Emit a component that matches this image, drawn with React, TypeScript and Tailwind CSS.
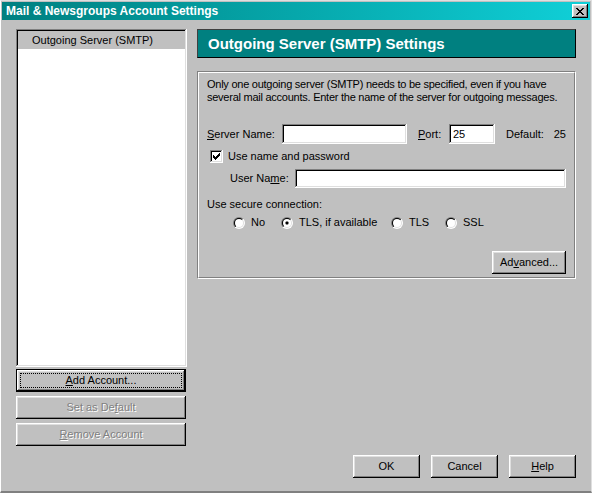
import type { ReactNode } from "react";

const raised =
  "shadow-[inset_-1px_-1px_#000,inset_1px_1px_#fff,inset_-2px_-2px_#808080,inset_2px_2px_#dfdfdf]";
const sunken =
  "shadow-[inset_-1px_-1px_#fff,inset_1px_1px_#808080,inset_-2px_-2px_#dfdfdf,inset_2px_2px_#000]";

function Button({
  children,
  className = "",
  isDefault = false,
  disabled = false,
}: {
  children: ReactNode;
  className?: string;
  isDefault?: boolean;
  disabled?: boolean;
}) {
  if (isDefault) {
    return (
      <div className={`border border-black bg-[#c0c0c0] ${className}`}>
        <div className={`flex h-full items-center justify-center p-[3px] ${raised}`}>
          <div className="flex h-full w-full items-center justify-center border border-dotted border-black">
            {children}
          </div>
        </div>
      </div>
    );
  }
  return (
    <div
      className={`flex items-center justify-center bg-[#c0c0c0] ${raised} ${
        disabled ? "text-[#808080] [text-shadow:1px_1px_0_#fff]" : "text-black"
      } ${className}`}
    >
      {children}
    </div>
  );
}

function Field({ className = "", value = "" }: { className?: string; value?: string }) {
  return (
    <div className={`flex items-center bg-white px-[4px] ${sunken} ${className}`}>
      {value}
    </div>
  );
}

function Radio({ checked = false, label }: { checked?: boolean; label: string }) {
  return (
    <div className="flex items-center gap-[6px]">
      <svg width="12" height="12" viewBox="0 0 12 12">
        <defs>
          <linearGradient id="ro" x1="0" y1="0" x2="1" y2="1">
            <stop offset="0.5" stopColor="#808080" />
            <stop offset="0.5" stopColor="#ffffff" />
          </linearGradient>
          <linearGradient id="ri" x1="0" y1="0" x2="1" y2="1">
            <stop offset="0.5" stopColor="#000000" />
            <stop offset="0.5" stopColor="#dfdfdf" />
          </linearGradient>
        </defs>
        <circle cx="6" cy="6" r="6" fill="url(#ro)" />
        <circle cx="6" cy="6" r="5" fill="url(#ri)" />
        <circle cx="6" cy="6" r="4" fill="#fff" />
        {checked && <rect x="4.5" y="4.5" width="3" height="3" rx="1" fill="#000" />}
      </svg>
      <span>{label}</span>
    </div>
  );
}

export default function App() {
  return (
    <div className="h-[493px] w-[592px] overflow-hidden bg-[#c0c0c0] font-['Liberation_Sans',Arial,sans-serif] text-[11px] leading-[13px] text-black">
      <div className="flex h-full flex-col border-b-2 border-l border-t border-r border-b-[#808080] border-l-white border-t-[#dfdfdf] border-r-[#dfdfdf] pl-px pt-px pr-px">
        {/* title bar */}
        <div className="flex h-[18px] items-center justify-between bg-gradient-to-r from-[#008080] to-[#10d0d8] pl-[4px] pr-[2px]">
          <span className="text-[12px] font-bold text-white">Mail &amp; Newsgroups Account Settings</span>
          <div className={`flex h-[14px] w-[16px] items-center justify-center bg-[#c0c0c0] ${raised}`}>
            <svg width="8" height="7" viewBox="0 0 8 7">
              <path d="M0 0h2v1h1v1h2V1h1V0h2v1H7v1H6v1H5v1h1v1h1v1h1v1H6V6H5V5H3v1H2v1H0V6h1V5h1V4h1V3H2V2H1V1H0z" fill="#000" />
            </svg>
          </div>
        </div>

        <div className="flex flex-1 flex-col">
          <div className="flex pl-[14px] pt-[9px]">
            {/* left column */}
            <div className="flex w-[171px] flex-col">
              <div className={`h-[338px] bg-white p-[2px] ${sunken}`}>
                <div className="flex h-[18px] items-center bg-[#c0c0c0] pl-[14px]">Outgoing Server (SMTP)</div>
              </div>
              <Button isDefault className="mt-[2px] h-[23px] w-[170px]">
                <span>
                  <u>A</u>dd Account...
                </span>
              </Button>
              <Button disabled className="mt-[4px] h-[23px] w-[170px]">
                <span>
                  Set as De<u>f</u>ault
                </span>
              </Button>
              <Button disabled className="mt-[4px] h-[23px] w-[170px]">
                <span>
                  <u>R</u>emove Account
                </span>
              </Button>
            </div>

            {/* right column */}
            <div className="ml-[10px] flex w-[379px] flex-col">
              <div className="flex h-[29px] items-center border border-t-[#404040] border-l-[#404040] border-b-black border-r-black bg-[#008080] pl-[10px] text-[15px] font-bold text-white">
                Outgoing Server (SMTP) Settings
              </div>

              <div className="mt-[13px] h-[208px] border border-b-white border-r-white border-t-[#808080] border-l-[#808080]">
                <div className="h-full border border-b-[#808080] border-r-[#808080] border-t-white border-l-white px-[8px] pt-[5px]">
                  <p className="whitespace-nowrap tracking-[-0.25px]">
                    Only one outgoing server (SMTP) needs to be specified, even if you have
                    <br />
                    several mail accounts. Enter the name of the server for outgoing messages.
                  </p>

                  <div className="mt-[20px] flex h-[20px] items-center">
                    <span className="w-[75px]">
                      <u>S</u>erver Name:
                    </span>
                    <Field className="h-[20px] w-[125px]" />
                    <span className="ml-[11px] w-[31px]">
                      <u>P</u>ort:
                    </span>
                    <Field className="h-[20px] w-[46px]" value="25" />
                    <span className="ml-[11px]">Default:</span>
                    <span className="ml-auto">25</span>
                  </div>

                  <div className="mt-[6px] flex h-[13px] items-center pl-[3px]">
                    <div className={`flex h-[13px] w-[13px] items-center justify-center bg-white ${sunken}`}>
                      <svg width="7" height="7" viewBox="0 0 7 7">
                        <path d="M0 2h1v1h1v1h1V3h1V2h1V1h1V0h1v3H6v1H5v1H4v1H3v1H2V6H1V5H0z" fill="#000" />
                      </svg>
                    </div>
                    <span className="ml-[5px]">Use name and password</span>
                  </div>

                  <div className="mt-[6px] flex h-[19px] items-center pl-[23px]">
                    <span className="w-[65px]">
                      User Na<u>m</u>e:
                    </span>
                    <Field className="h-[19px] flex-1" />
                  </div>

                  <p className="mt-[10px]">Use secure connection:</p>

                  <div className="mt-[5px] flex h-[13px] items-center pl-[26px]">
                    <div className="w-[48px]">
                      <Radio label="No" />
                    </div>
                    <div className="w-[110px]">
                      <Radio checked label="TLS, if available" />
                    </div>
                    <div className="w-[54px]">
                      <Radio label="TLS" />
                    </div>
                    <Radio label="SSL" />
                  </div>

                  <div className="mt-[22px] flex justify-end">
                    <Button className="h-[23px] w-[74px]">
                      <span>
                        Ad<u>v</u>anced...
                      </span>
                    </Button>
                  </div>
                </div>
              </div>
            </div>
          </div>

          <div className="mt-auto mb-[13px] flex justify-end gap-[11px] pr-[14px]">
            <Button className="h-[23px] w-[67px]">OK</Button>
            <Button className="h-[23px] w-[67px]">Cancel</Button>
            <Button className="h-[23px] w-[67px]">
              <span>
                <u>H</u>elp
              </span>
            </Button>
          </div>
        </div>
      </div>
    </div>
  );
}
